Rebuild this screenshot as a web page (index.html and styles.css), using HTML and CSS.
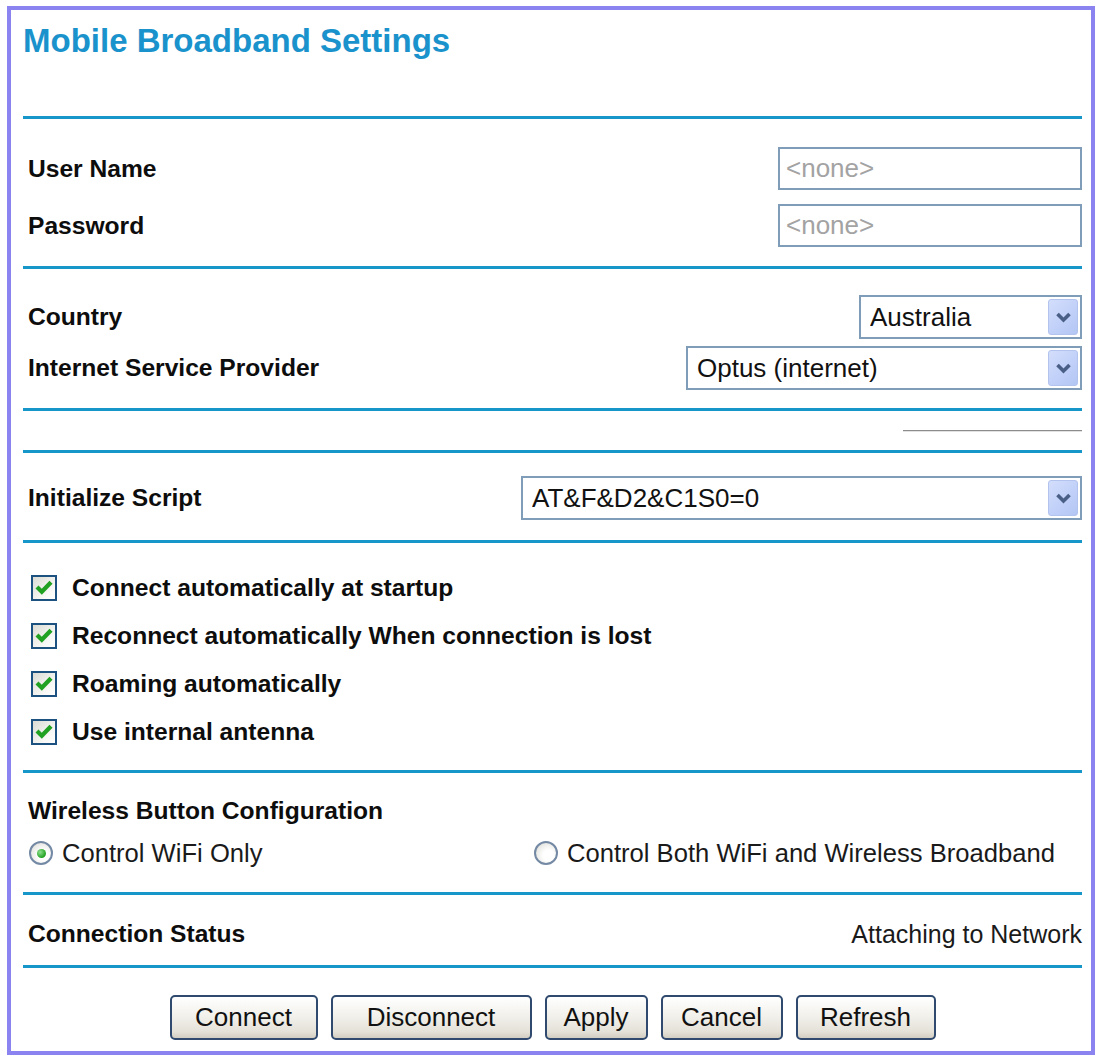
FILE: index.html
```html
<!DOCTYPE html>
<html lang="en">
<head>
    <meta charset="UTF-8">
    <title>Mobile Broadband Settings</title>
    <link rel="stylesheet" href="styles.css">
</head>
<body>
    <div class="frame">
        <h1 class="title">Mobile Broadband Settings</h1>
        <div class="rule"></div>

        <div class="sec sec-login">
            <div class="row">
                <span class="lbl">User Name</span>
                <input class="txt" type="text" value="&lt;none&gt;">
            </div>
            <div class="row">
                <span class="lbl">Password</span>
                <input class="txt" type="text" value="&lt;none&gt;">
            </div>
        </div>
        <div class="rule"></div>

        <div class="sec sec-isp">
            <div class="row">
                <span class="lbl">Country</span>
                <div class="sel sel-country">
                    <select><option>Australia</option></select>
                    <span class="arrow"><svg width="17" height="12" viewBox="0 0 17 12"><path d="M2.5 3 L8.5 9 L14.5 3" fill="none" stroke="#4a5f86" stroke-width="3.6"/></svg></span>
                </div>
            </div>
            <div class="row">
                <span class="lbl">Internet Service Provider</span>
                <div class="sel sel-isp">
                    <select><option>Optus (internet)</option></select>
                    <span class="arrow"><svg width="17" height="12" viewBox="0 0 17 12"><path d="M2.5 3 L8.5 9 L14.5 3" fill="none" stroke="#4a5f86" stroke-width="3.6"/></svg></span>
                </div>
            </div>
        </div>
        <div class="rule"></div>

        <div class="sec sec-blank">
            <div class="thin"></div>
        </div>
        <div class="rule"></div>

        <div class="sec sec-script">
            <div class="row">
                <span class="lbl">Initialize Script</span>
                <div class="sel sel-script">
                    <select><option>AT&amp;F&amp;D2&amp;C1S0=0</option></select>
                    <span class="arrow"><svg width="17" height="12" viewBox="0 0 17 12"><path d="M2.5 3 L8.5 9 L14.5 3" fill="none" stroke="#4a5f86" stroke-width="3.6"/></svg></span>
                </div>
            </div>
        </div>
        <div class="rule"></div>

        <div class="sec sec-opts">
            <label class="chk"><span class="box"><svg width="22" height="22" viewBox="0 0 22 22"><path d="M4 10 L8.8 14.8 L18 5.2" fill="none" stroke="#21a121" stroke-width="4.2"/></svg></span>Connect automatically at startup</label>
            <label class="chk"><span class="box"><svg width="22" height="22" viewBox="0 0 22 22"><path d="M4 10 L8.8 14.8 L18 5.2" fill="none" stroke="#21a121" stroke-width="4.2"/></svg></span>Reconnect automatically When connection is lost</label>
            <label class="chk"><span class="box"><svg width="22" height="22" viewBox="0 0 22 22"><path d="M4 10 L8.8 14.8 L18 5.2" fill="none" stroke="#21a121" stroke-width="4.2"/></svg></span>Roaming automatically</label>
            <label class="chk"><span class="box"><svg width="22" height="22" viewBox="0 0 22 22"><path d="M4 10 L8.8 14.8 L18 5.2" fill="none" stroke="#21a121" stroke-width="4.2"/></svg></span>Use internal antenna</label>
        </div>
        <div class="rule"></div>

        <div class="sec sec-wifi">
            <div class="row-lbl"><span class="lbl">Wireless Button Configuration</span></div>
            <div class="radios">
                <label class="rad"><span class="circle on"><span class="dot"></span></span>Control WiFi Only</label>
                <label class="rad"><span class="circle"></span>Control Both WiFi and Wireless Broadband</label>
            </div>
        </div>
        <div class="rule"></div>

        <div class="sec sec-status">
            <div class="row status">
                <span class="lbl">Connection Status</span>
                <span class="val">Attaching to Network</span>
            </div>
        </div>
        <div class="rule"></div>

        <div class="sec sec-btns">
            <button class="btn b-connect">Connect</button>
            <button class="btn b-disconnect">Disconnect</button>
            <button class="btn b-apply">Apply</button>
            <button class="btn b-cancel">Cancel</button>
            <button class="btn b-refresh">Refresh</button>
        </div>
    </div>
</body>
</html>
```

FILE: styles.css
```css
*{
    margin: 0;
    padding: 0;
    box-sizing: border-box;
}
body{
    background: #fff;
    font-family: "Liberation Sans", Arial, sans-serif;
    color: #111;
}
.frame{
    margin: 6px 0 0 7px;
    width: 1088px;
    height: 1049px;
    border: 4px solid #8b84f0;
    padding: 0 9px 0 12px;
}
.title{
    height: 106px;
    padding-top: 14px;
    font-size: 33px;
    line-height: 33px;
    font-weight: bold;
    color: #1a92cc;
}
.rule{
    height: 3px;
    background: #1796c9;
}
.lbl{
    padding-left: 5px;
    font-size: 24.6px;
    font-weight: bold;
    color: #0d0d0d;
}
.row{
    display: flex;
    align-items: center;
    justify-content: space-between;
}

/* login */
.sec-login{
    height: 147px;
    padding-top: 28px;
}
.sec-login .row{
    height: 43px;
    margin-bottom: 14px;
}
.txt{
    width: 304px;
    height: 43px;
    border: 2px solid #7f9db9;
    padding-left: 6px;
    font-family: "Liberation Sans", Arial, sans-serif;
    font-size: 26px;
    color: #a3a3a3;
    outline: none;
}

/* selects */
.sec-isp{
    height: 139px;
    padding-top: 26px;
}
.sec-isp .row{
    height: 44px;
    margin-bottom: 7px;
}
.sel{
    position: relative;
    height: 44px;
}
.sel select{
    -webkit-appearance: none;
    appearance: none;
    width: 100%;
    height: 100%;
    border: 2px solid #7f9db9;
    background: #fff;
    padding-left: 9px;
    font-family: "Liberation Sans", Arial, sans-serif;
    font-size: 26px;
    color: #111;
    border-radius: 0;
}
.sel .arrow{
    position: absolute;
    top: 4px;
    right: 4px;
    width: 30px;
    height: 36px;
    border: 1px solid #b2c3ee;
    border-radius: 3px;
    background: linear-gradient(135deg, #d4defc, #bfcff8 60%, #b3c6f3);
    display: flex;
    align-items: center;
    justify-content: center;
}
.sel-country{ width: 223px; }
.sel-isp{ width: 396px; }
.sel-script{ width: 561px; }

.sec-blank{
    height: 39px;
    padding-top: 19px;
    display: flex;
    justify-content: flex-end;
}
.thin{
    width: 179px;
    height: 2px;
    border-top: 1px solid #8c8c8c;
    border-bottom: 1px solid #e2e2e2;
}

.sec-script{
    height: 87px;
    padding-top: 23px;
}
.sec-script .row{
    height: 44px;
}

/* checkboxes */
.sec-opts{
    height: 227px;
    padding-top: 21px;
}
.chk{
    display: flex;
    align-items: center;
    height: 48px;
    padding-left: 8px;
    font-size: 24.6px;
    font-weight: bold;
    color: #0d0d0d;
}
.box{
    width: 26px;
    height: 26px;
    margin-right: 15px;
    border: 2px solid #1c5180;
    background: linear-gradient(135deg, #dcdcd5, #f8f8f6 70%, #fff);
    display: flex;
    align-items: center;
    justify-content: center;
}

/* radios */
.sec-wifi{
    height: 119px;
    padding-top: 20px;
}
.row-lbl{
    height: 36px;
    display: flex;
    align-items: center;
    margin-bottom: 6px;
}
.radios{
    height: 36px;
    display: grid;
    grid-template-columns: 505px 1fr;
    align-items: center;
    padding-left: 6px;
}
.rad{
    display: flex;
    align-items: center;
    font-size: 25.6px;
    color: #1a1a1a;
}
.circle{
    width: 24px;
    height: 24px;
    margin-right: 9px;
    border-radius: 50%;
    border: 2px solid #7489a4;
    background: radial-gradient(circle at 62% 62%, #fff 30%, #d8d8d2);
    display: flex;
    align-items: center;
    justify-content: center;
}
.dot{
    width: 9px;
    height: 9px;
    border-radius: 50%;
    background: radial-gradient(circle at 35% 35%, #8ee08e, #21a121 70%);
}

/* status */
.sec-status{
    height: 70px;
    padding-top: 20px;
}
.status{
    height: 38px;
}
.val{
    font-size: 25px;
    color: #1a1a1a;
}

/* buttons */
.sec-btns{
    height: 83px;
    padding-top: 27px;
    display: flex;
    justify-content: center;
    align-items: flex-start;
    gap: 13px;
}
.btn{
    height: 45px;
    border: 2px solid #2f4a6e;
    border-radius: 5px;
    background: linear-gradient(#ffffff, #f2f1ec 45%, #e4e1d8 85%, #d3cec2);
    font-family: "Liberation Sans", Arial, sans-serif;
    font-size: 26px;
    color: #111;
    cursor: pointer;
}
.b-connect{ width: 148px; }
.b-disconnect{ width: 201px; }
.b-apply{ width: 103px; }
.b-cancel{ width: 122px; }
.b-refresh{ width: 140px; }
```
